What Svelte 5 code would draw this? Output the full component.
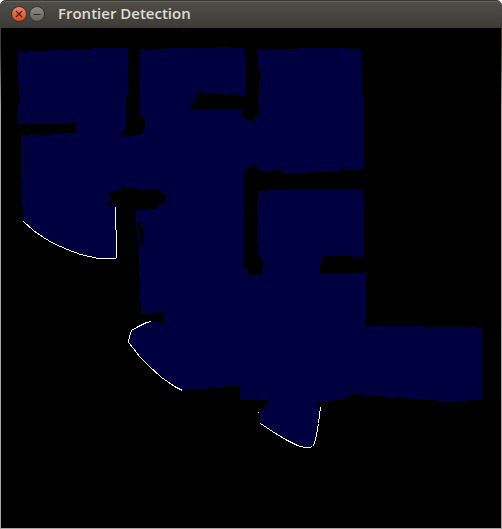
<script>
  const title = 'Frontier Detection';

  // Outline of the explored floor area
  const explored =
    'M17 52H29V51H49V50H70V49H91V48H127V67H128V92H129V95H125V112H126V128L123 132L120 133V136H135V135H142V132H144L145 127V119H143L140 115V50H153V49H167V48H217V47H228V48H244V56H245V95H237V94H232V95L213 94V93H201V92H198V97L193 98V102L190 106V109H241V117L243 119L248 120L250 122H255V115H259V105H258V94H259V86L260 77H261V70H258V49H298V48H349V49H361V75H362V93H363V169H351V170H341V171H325V172H308V173H284V172L280 170H272V171H261V170L258 169V166H250V168H246V173L244 174L243 180L244 184L243 190L244 192V206H243V218H244V269H248V275H259L261 273H262V271L263 265L262 258L260 256H257V249L259 246H257V220L258 217L257 215V200L259 199V194L258 191H268V190H289V189H362V193H363V218H364V257L360 256L357 257H352L349 256H322V262L319 265V273H366V319L364 320V322L365 324L366 328H369V327L371 326H424V327H475V328H482V400H467L465 401L462 400L460 401H436V400H422V399H408V398H401V397H385V396H373V395H359V394H350V396L347 398L340 399V400H331V401H317V403L316 404L318 407H320L314 443L312 446L309 447H304L297 445L285 439L272 431L260 424V411H264L265 405L268 403V399H260V400H240V387L238 386H228L218 387V388H210L203 389H192V390H183L174 386L161 377L148 365L139 356L133 348L129 343V337L131 330L138 326L146 323L151 321H155L159 323H164V312H155L154 314H141V302H140V278H139V254H138V245L137 235L136 219V210H146V211L147 209H155L159 206V204H165V194H163L160 190H153V189H134V188H122V190L111 191L107 193L109 195L111 198L109 203H106V206H115V229H116V257L114 258H97L80 254L67 249L53 243L43 237L33 230L23 221V206H22V181H21V135H25V136H29V135H34V134L41 135H43V136H48L50 134L76 133V121H71V124H17V112H18V103H20V94H19V82H18V73H17Z' +
    'M138 222H141V225L143 229L144 235V245L141 246L138 245V243L140 241L139 230L138 226Z';

  // Open boundaries between explored and unknown space
  const frontiers = [
    '115,206 115,229 116,230 116,257 115,258 98,258 89,256 80,254 67,249 53,243 43,237 33,230 23,221',
    '151,321 146,322 138,326 131,330 129,336 128,342 133,348 139,356 148,365 161,377 167,381 174,386 182,390',
    '320,407 318,423 316,434 314,443 312,446 309,447 304,447 297,445 285,439 272,431 260,423',
    '258,411 258,412'
  ];
</script>

<main class="window">
  <header>
    <button class="close" aria-label="Close">
      <svg viewBox="0 0 14 14" aria-hidden="true"><path d="M4 4l6 6m0-6l-6 6" /></svg>
    </button>
    <button class="minimise" aria-label="Minimise">
      <svg viewBox="0 0 14 14" aria-hidden="true"><path d="M3.5 7.5h7" /></svg>
    </button>
    <h1>{title}</h1>
  </header>
  <div class="frame">
    <svg class="map" viewBox="1 28 500 500" role="img" aria-label="Explored floor map">
      <path class="area" d={explored} />
      {#each frontiers as points}
        <polyline class="frontier" {points} transform="translate(.5 .5)" />
      {/each}
    </svg>
  </div>
</main>

<style>
  :global(body) {
    margin: 0;
    background: #fff;
  }
  .window {
    overflow: hidden;
    border-radius: 6px 6px 0 0;
    background: #3c3b37;
  }
  header {
    display: flex;
    align-items: center;
    gap: 2px;
    height: 28px;
    box-sizing: border-box;
    padding: 0 11px;
    border-radius: 6px 6px 0 0;
    background: linear-gradient(#504f49, #3c3b37);
    box-shadow: inset 0 1px #3a3935, inset 0 2px #65635b;
  }
  button {
    width: 16px;
    height: 16px;
    padding: 0;
    border: 1px solid #34332f;
    border-radius: 50%;
  }
  button svg {
    display: block;
    width: 14px;
    height: 14px;
    fill: none;
    stroke: #34251f;
    stroke-width: 1.2;
  }
  .close {
    background: linear-gradient(#f58560, #dc4918);
  }
  .minimise {
    background: linear-gradient(#8b8a83, #65645e);
  }
  h1 {
    margin: 0 0 0 11px;
    padding-bottom: 2px;
    color: #dfdbd2;
    font: 600 15px/20px "Open Sans", "Noto Sans", sans-serif;
    white-space: nowrap;
  }
  .frame {
    padding: 0 1px 1px;
    background: linear-gradient(#3c3b37 20px, #aaa7a2 80px);
  }
  .map {
    display: block;
    width: 100%;
    background: #000;
    shape-rendering: crispEdges;
  }
  .area {
    fill: #000040;
    fill-rule: evenodd;
  }
  .frontier {
    fill: none;
    stroke: #fff;
    stroke-width: 1;
  }
</style>
